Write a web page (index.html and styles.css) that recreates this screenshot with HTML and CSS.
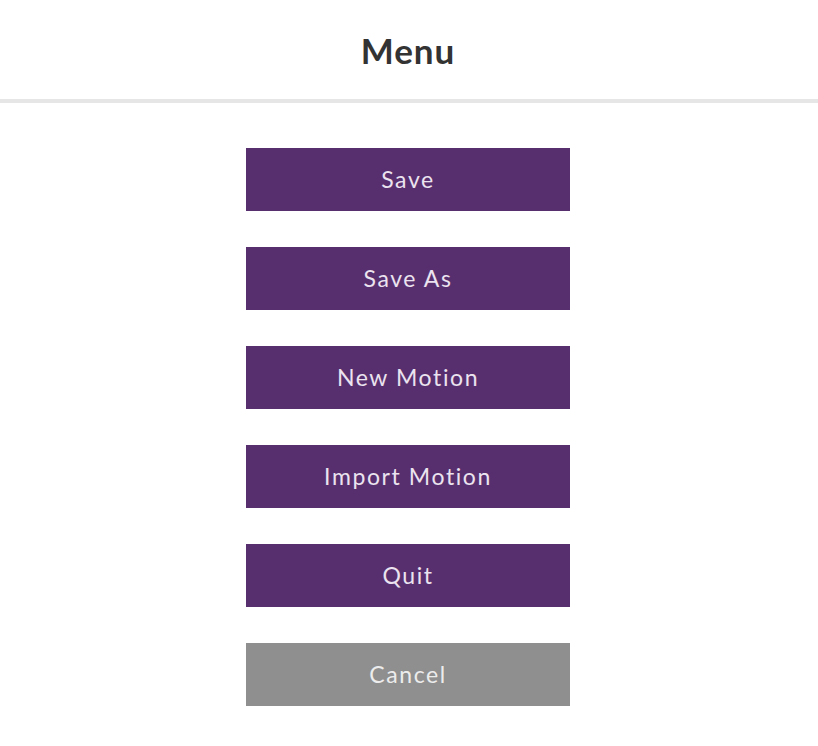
FILE: index.html
```html
<!DOCTYPE html>
<html>
<head>
<meta charset="utf-8">
<link rel="stylesheet" href="styles.css">
</head>
<body>
<header class="header"><h1 class="title">Menu</h1></header>
<main class="menu">
  <button class="btn">Save</button>
  <button class="btn">Save As</button>
  <button class="btn">New Motion</button>
  <button class="btn">Import Motion</button>
  <button class="btn">Quit</button>
  <button class="btn btn-cancel">Cancel</button>
</main>
</body>
</html>
```
FILE: styles.css
```css
html, body {
  margin: 0;
  padding: 0;
  background: #ffffff;
  font-family: "Lato", "DejaVu Sans", sans-serif;
}
.header {
  height: 99px;
  border-bottom: 4px solid #e6e6e6;
  display: flex;
  align-items: center;
  justify-content: center;
  padding-right: 2px;
}
.title {
  margin: 0;
  font-size: 35px;
  font-weight: 700;
  color: #333333;
  letter-spacing: 1px;
}
.menu {
  display: flex;
  flex-direction: column;
  align-items: center;
  gap: 36px;
  padding-top: 45px;
  padding-right: 2px;
}
.btn {
  width: 324px;
  height: 63px;
  border: none;
  margin: 0;
  padding: 0 0 2px 0;
  background: #582f6e;
  color: #ebe3ef;
  font-family: "Lato", "DejaVu Sans", sans-serif;
  font-size: 23px;
  letter-spacing: 1.6px;
}
.btn-cancel {
  background: #8f8f8f;
  color: #ececec;
}
```
